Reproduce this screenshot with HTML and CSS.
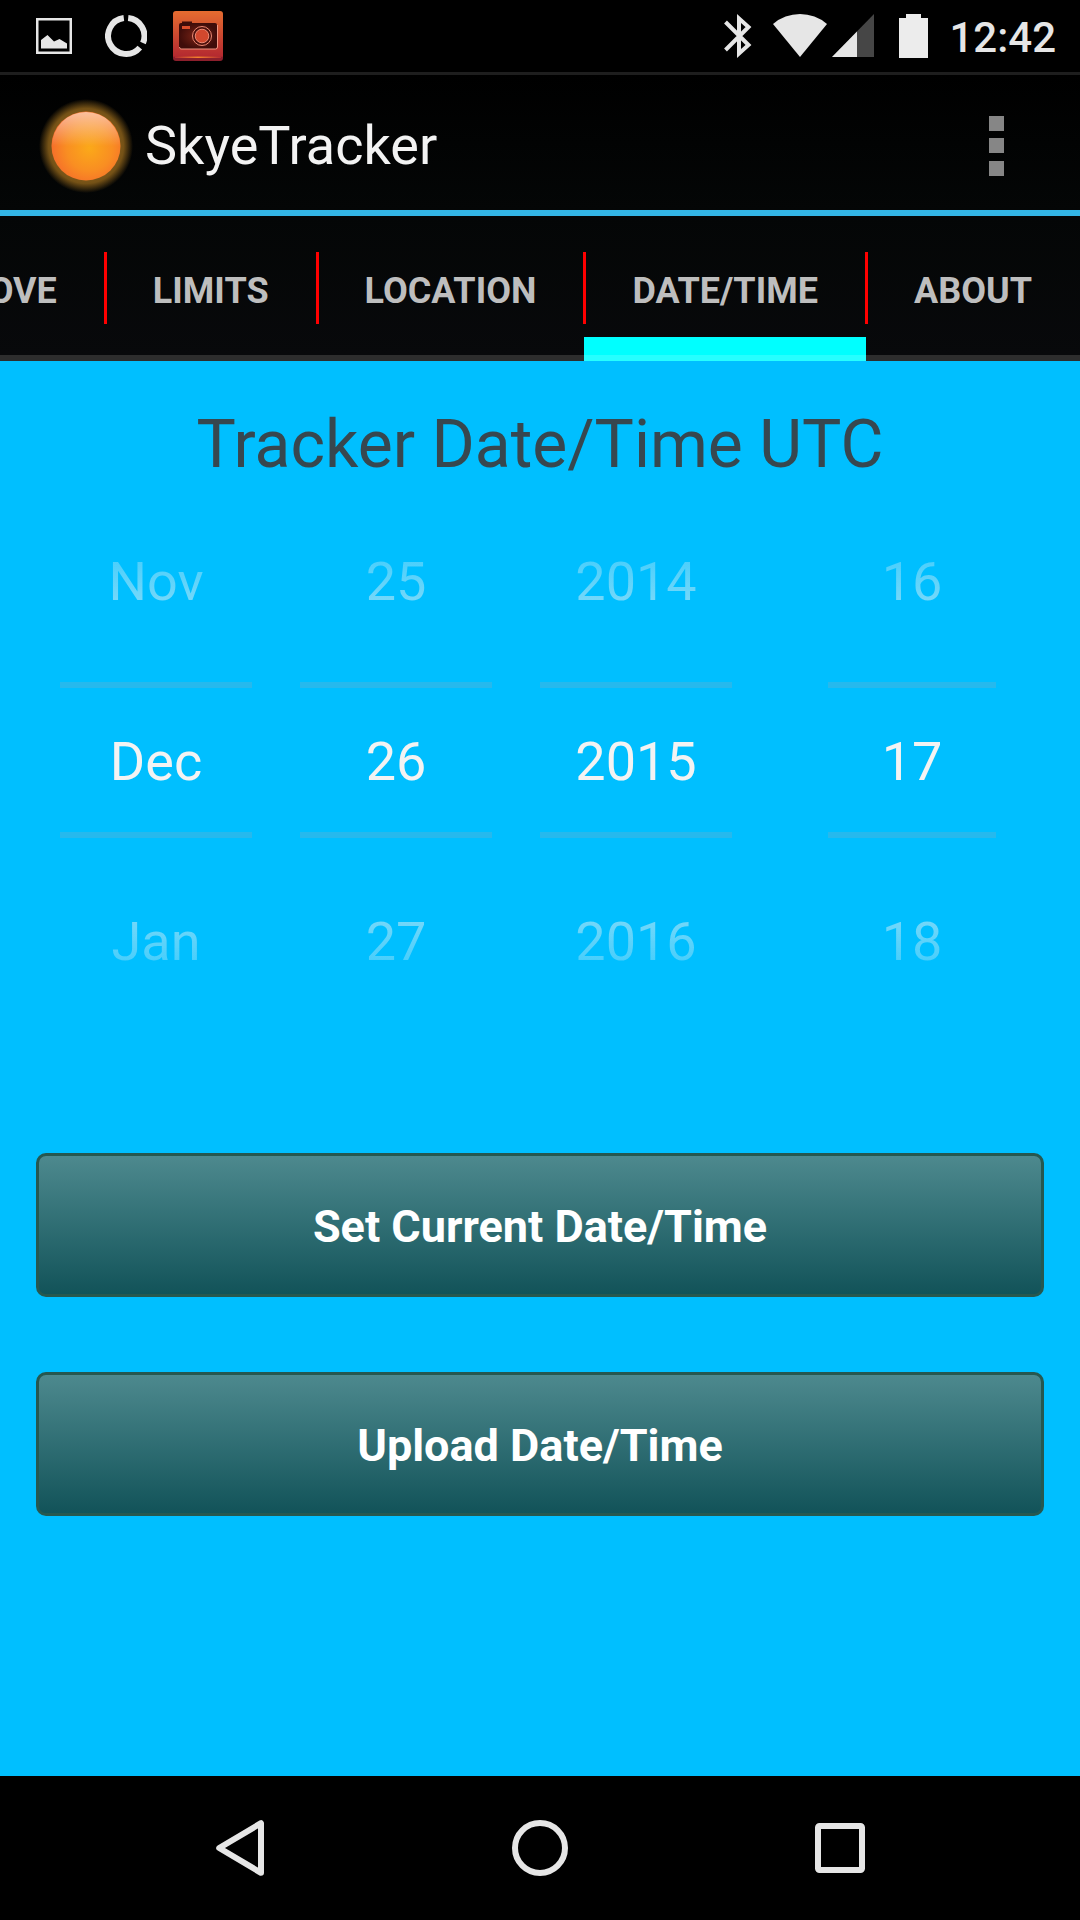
FILE: index.html
```html
<!DOCTYPE html>
<html lang="en">
<head>
  <meta charset="utf-8">
  <meta name="viewport" content="width=device-width, initial-scale=1">
  <title>SkyeTracker</title>
  <link rel="stylesheet" href="styles.css">
</head>
<body>
  <div class="screen">
    <div class="status-bar">
      <div class="notifications">
        <svg width="36" height="36" viewBox="0 0 36 36" role="img" aria-label="Picture saved">
          <rect x="1.25" y="1.25" width="33.5" height="33.5" fill="none" stroke="#e6e6e6" stroke-width="2.5"/>
          <path d="M5 30.500V22L11.500 17L18 23.500L23.500 21L31 25.500V30.500Z" fill="#e6e6e6"/>
        </svg>
        <svg width="42" height="42" viewBox="0 0 42 42" role="img" aria-label="Sync">
          <g fill="none" stroke="#e6e6e6" stroke-width="6">
            <path d="M23.200 3.100A18 18 0 0 1 38 28"/>
            <path d="M34.800 32.600A18 18 0 1 1 18.800 3.100"/>
          </g>
        </svg>
        <svg width="50" height="50" viewBox="0 0 50 50" role="img" aria-label="Camera">
          <defs>
            <linearGradient id="cam-bg" x1="0" y1="0" x2="0" y2="1">
              <stop offset="0" stop-color="#e56c30"/>
              <stop offset=".9" stop-color="#b52a30"/>
              <stop offset=".93" stop-color="#8c1f2c"/>
              <stop offset="1" stop-color="#8c1f2c"/>
            </linearGradient>
            <radialGradient id="cam-body">
              <stop offset="0" stop-color="#7c2416"/>
              <stop offset="1" stop-color="#3f0d0a"/>
            </radialGradient>
            <linearGradient id="cam-glow">
              <stop offset="0" stop-color="#b52a30"/>
              <stop offset=".5" stop-color="#f5822c"/>
              <stop offset="1" stop-color="#b52a30"/>
            </linearGradient>
          </defs>
          <rect width="50" height="50" rx="3" fill="url(#cam-bg)"/>
          <rect x="2" y="45.500" width="46" height="1.500" fill="url(#cam-glow)"/>
          <path d="M10 12.500V11.500H18V12.500" fill="none" stroke="#3f0d0a" stroke-width="2"/>
          <rect x="6" y="12" width="38" height="26" rx="2" fill="url(#cam-body)"/>
          <path d="M44.500 14V36Q44.500 38 42.500 38H8Q6.500 38 6.500 36" fill="none" stroke="#ef9480" stroke-width="1"/>
          <rect x="9" y="15" width="8" height="3" fill="#dc4d2b"/>
          <circle cx="29" cy="25" r="9.500" fill="#4b100c" stroke="#ed8a74" stroke-width="1"/>
          <circle cx="29" cy="25" r="6.800" fill="#d2482e" stroke="#ed8a74" stroke-width="1"/>
        </svg>
      </div>
      <div class="system-icons">
        <svg width="28" height="44" viewBox="0 0 28 44" role="img" aria-label="Bluetooth">
          <path d="M1.500 8L24.500 31L15 39.500V4.500L24.500 13L1.500 36" fill="none" stroke="#e6e6e6" stroke-width="4"/>
        </svg>
        <svg class="wifi" width="54" height="44" viewBox="0 0 54 44" role="img" aria-label="Wi-Fi">
          <path d="M0 10A41.500 41.500 0 0 1 54 10L27 43Z" fill="#e6e6e6"/>
        </svg>
        <svg class="cell" width="42" height="44" viewBox="0 0 42 44" role="img" aria-label="Mobile signal">
          <path d="M0 43L42 0V43Z" fill="#464646"/>
          <path d="M0 43L25 17.400V43Z" fill="#e6e6e6"/>
        </svg>
        <svg class="battery" width="29" height="44" viewBox="0 0 29 44" role="img" aria-label="Battery full">
          <path d="M0 4H7V0H22V4H29V44H0Z" fill="#ececec"/>
        </svg>
        <time class="clock">12:42</time>
      </div>
    </div>

    <header class="action-bar">
      <svg class="app-icon" width="96" height="96" viewBox="0 0 96 96" aria-hidden="true">
        <defs>
          <radialGradient id="sun-halo">
            <stop offset=".7" stop-color="#80591a"/>
            <stop offset=".8" stop-color="#745116"/>
            <stop offset="1" stop-color="#745116" stop-opacity="0"/>
          </radialGradient>
          <radialGradient id="sun-core" cx=".55" cy=".53" r=".55">
            <stop offset="0" stop-color="#fba919"/>
            <stop offset=".6" stop-color="#f98e22"/>
            <stop offset="1" stop-color="#f66f2a"/>
          </radialGradient>
          <linearGradient id="sun-shine" x1="0" y1="0" x2="0" y2="1">
            <stop offset="0" stop-color="#fff" stop-opacity=".55"/>
            <stop offset=".5" stop-color="#fff" stop-opacity="0"/>
          </linearGradient>
        </defs>
        <circle cx="48" cy="48" r="47" fill="url(#sun-halo)"/>
        <circle cx="48" cy="48" r="34.500" fill="url(#sun-core)"/>
        <circle cx="48" cy="48" r="34" fill="url(#sun-shine)"/>
      </svg>
      <h1 class="app-title">SkyeTracker</h1>
      <button class="overflow" type="button" aria-label="More options">
        <svg width="15" height="60" viewBox="0 0 15 60" aria-hidden="true">
          <path d="M0 0H15V15H0ZM0 22H15V37H0ZM0 45H15V60H0Z" fill="#868686"/>
        </svg>
      </button>
    </header>

    <nav class="tabs" aria-label="Sections">
      <a class="tab" href="#move">MOVE</a>
      <a class="tab" href="#limits">LIMITS</a>
      <a class="tab" href="#location">LOCATION</a>
      <a class="tab tab-active" href="#datetime" aria-current="page">DATE/TIME</a>
      <a class="tab" href="#about">ABOUT</a>
    </nav>

    <main class="content" id="datetime">
      <h2 class="heading">Tracker Date/Time UTC</h2>

      <form class="form">
        <div class="pickers">
          <div class="picker">
            <button class="step" type="button">Nov</button>
            <input class="value" type="text" aria-label="Month" value="Dec">
            <button class="step" type="button">Jan</button>
          </div>
          <div class="picker">
            <button class="step" type="button">25</button>
            <input class="value" type="text" aria-label="Day" value="26">
            <button class="step" type="button">27</button>
          </div>
          <div class="picker">
            <button class="step" type="button">2014</button>
            <input class="value" type="text" aria-label="Year" value="2015">
            <button class="step" type="button">2016</button>
          </div>
          <div class="picker picker-hour">
            <button class="step" type="button">16</button>
            <input class="value" type="text" aria-label="Hour" value="17">
            <button class="step" type="button">18</button>
          </div>
        </div>

        <div class="actions">
          <button class="action" type="button">Set Current Date/Time</button>
          <button class="action" type="button">Upload Date/Time</button>
        </div>
      </form>
    </main>

    <div class="nav-bar">
      <button class="nav-key" type="button" aria-label="Back">
        <svg width="60" height="60" viewBox="0 0 60 60" aria-hidden="true">
          <path d="M9.200 30L51 5.200V54.800Z" fill="none" stroke="#e6e6e6" stroke-width="6" stroke-linejoin="round"/>
        </svg>
      </button>
      <button class="nav-key" type="button" aria-label="Home">
        <svg width="60" height="60" viewBox="0 0 60 60" aria-hidden="true">
          <circle cx="30" cy="30" r="25" fill="none" stroke="#e6e6e6" stroke-width="6"/>
        </svg>
      </button>
      <button class="nav-key" type="button" aria-label="Recent apps">
        <svg width="60" height="60" viewBox="0 0 60 60" aria-hidden="true">
          <rect x="8" y="8" width="44" height="44" rx="1.500" fill="none" stroke="#e6e6e6" stroke-width="6"/>
        </svg>
      </button>
    </div>
  </div>
</body>
</html>
```

FILE: styles.css
```css
*,
*::before,
*::after {
  box-sizing: border-box;
}

body {
  margin: 0;
  background: #000;
  font-family: Roboto, "Liberation Sans", sans-serif;
}

svg {
  display: block;
  flex: none;
}

button,
input {
  margin: 0;
  padding: 0;
  border: 0;
  background: none;
  color: inherit;
  font: inherit;
}

.screen {
  display: flex;
  flex-direction: column;
  min-height: 100vh;
  overflow: hidden;
}

/* System status bar */
.status-bar {
  display: flex;
  align-items: center;
  justify-content: space-between;
  height: 72px;
  padding: 0 24px 0 36px;
  color: #e6e6e6;
}

.notifications {
  display: flex;
  align-items: center;
  gap: 30px;
}

.notifications svg + svg {
  margin-left: 3px;
}

.notifications svg:last-child {
  margin-left: -4px;
}

.system-icons {
  display: flex;
  align-items: center;
}

.wifi {
  margin-left: 21px;
}

.cell {
  margin-left: 5px;
}

.battery {
  margin-left: 25px;
}

.clock {
  margin-left: 21px;
  padding-top: 4px;
  font-size: 42px;
  font-weight: 500;
  line-height: 68px;
}

/* App bar */
.action-bar {
  display: flex;
  align-items: center;
  height: 144px;
  padding: 6px 48px 0 38px;
  border-top: 3px solid #1e1e1e;
  border-bottom: 6px solid #33b5e5;
  background: linear-gradient(#000, #040606);
}

.app-title {
  margin: 0 auto 0 11px;
  color: #f3f3f3;
  font-size: 54px;
  font-weight: 400;
  line-height: 64px;
}

.overflow {
  display: grid;
  place-items: center;
  width: 72px;
  height: 96px;
}

/* Section tabs, scrolled to the end */
.tabs {
  display: flex;
  justify-content: flex-end;
  height: 145px;
  border-bottom: 6px solid #2d2d2d;
  background: linear-gradient(#040606, #08090b);
}

.tab {
  position: relative;
  padding: 0 48px;
  color: #bebebe;
  font-size: 36px;
  font-weight: 700;
  line-height: 150px;
  text-decoration: none;
}

.tab + .tab::before {
  content: "";
  position: absolute;
  top: 36px;
  left: -1px;
  width: 3px;
  height: 72px;
  background: #f00;
}

.tab-active::after {
  content: "";
  position: absolute;
  right: 0;
  bottom: -6px;
  left: 0;
  height: 24px;
  background: linear-gradient(#0ff 18px, #26ffff 18px);
}

/* Date/time page */
.content {
  flex: 1;
  padding: 45px 36px 0;
  background: #00bfff;
}

.heading {
  margin: 0;
  color: #37474f;
  font-size: 66px;
  font-weight: 400;
  line-height: 78px;
  text-align: center;
}

.pickers {
  display: flex;
  gap: 48px;
  padding: 6px 48px 0 24px;
}

.picker {
  position: relative;
  display: grid;
  flex: 192 1 0;
  grid-template-rows: repeat(3, 180px);
  min-width: 0;
  color: #f3f3f3;
  font-size: 54px;
  text-align: center;
}

.picker-hour {
  flex-grow: 168;
  margin-left: 48px;
}

/* Lines above and below the chosen value */
.picker::before {
  content: "";
  position: absolute;
  top: 192px;
  right: 0;
  left: 0;
  height: 156px;
  border: solid #26b9ed;
  border-width: 6px 0;
}

.step,
.value {
  position: relative;
  width: 100%;
  min-width: 0;
  padding-top: 3px;
  text-align: center;
}

/* Neighbouring values fade out towards the picker's ends */
.step:first-child {
  color: transparent;
  background: linear-gradient(rgb(243 243 243 / 0), rgb(243 243 243 / .78));
  background-clip: text;
}

.step:last-child {
  color: transparent;
  background: linear-gradient(rgb(243 243 243 / .78), rgb(243 243 243 / 0));
  background-clip: text;
}

.actions {
  display: grid;
  gap: 75px;
  padding: 123px 0 75px;
}

.action {
  height: 144px;
  padding-top: 2px;
  border: 3px solid #265850;
  border-radius: 10px;
  background: linear-gradient(#4d898e, #125359);
  color: #fff;
  font-size: 45px;
  font-weight: 700;
}

/* System navigation keys */
.nav-bar {
  display: flex;
  justify-content: center;
  height: 144px;
  padding: 0 90px;
}

.nav-key {
  display: grid;
  flex: 1;
  place-items: center;
}
```
